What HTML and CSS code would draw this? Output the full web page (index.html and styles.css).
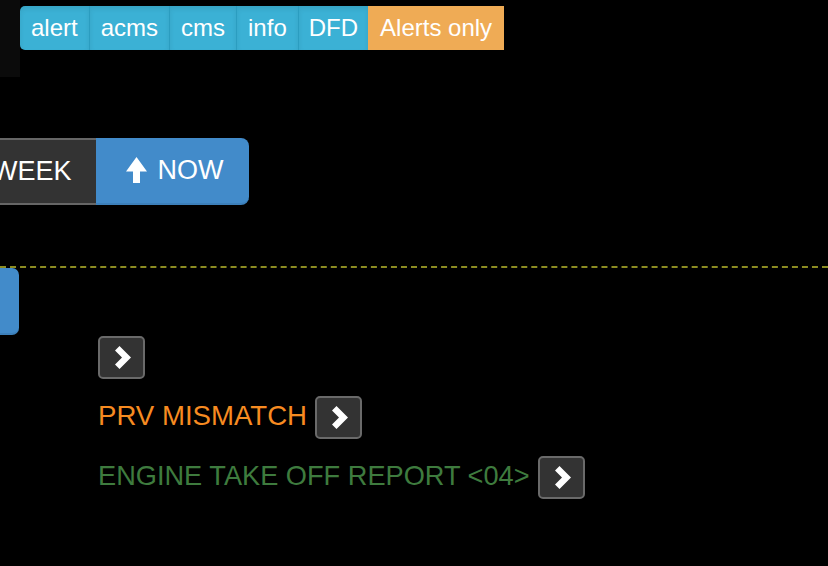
FILE: index.html
```html
<!DOCTYPE html>
<html>
<head>
<meta charset="utf-8">
<link rel="stylesheet" href="styles.css">
</head>
<body>
<div class="top">
  <div class="strip"></div>
  <div class="tabs">
    <span class="tab">alert</span><span class="tab">acms</span><span class="tab">cms</span><span class="tab">info</span><span class="tab narrow">DFD</span><span class="tab warn">Alerts only</span>
  </div>
</div>
<div class="range">
  <span class="rbtn week">WEEK</span>
  <span class="rbtn now"><svg class="up" width="21" height="27" viewBox="0 0 21 27"><polygon points="10.5,0 21,14.5 14,14.5 14,26 7,26 7,14.5 0,14.5" fill="#fff"/></svg>NOW</span>
</div>
<div class="divider"></div>
<div class="stub"></div>
<div class="events">
  <div class="row"><span class="chev"><svg width="16" height="23" viewBox="0 0 16 23"><polygon points="0,4.5 4.5,0 16,11.5 4.5,23 0,18.5 7,11.5" fill="#fff"/></svg></span></div>
  <div class="row"><span class="ev orange">PRV MISMATCH</span><span class="chev"><svg width="16" height="23" viewBox="0 0 16 23"><polygon points="0,4.5 4.5,0 16,11.5 4.5,23 0,18.5 7,11.5" fill="#fff"/></svg></span></div>
  <div class="row"><span class="ev green">ENGINE TAKE OFF REPORT &lt;04&gt;</span><span class="chev"><svg width="16" height="23" viewBox="0 0 16 23"><polygon points="0,4.5 4.5,0 16,11.5 4.5,23 0,18.5 7,11.5" fill="#fff"/></svg></span></div>
</div>
</body>
</html>
```
FILE: styles.css
```css
html, body {
  margin: 0;
  padding: 0;
  background: #000;
  overflow: hidden;
}
body {
  font-family: "Liberation Sans", Arial, Helvetica, sans-serif;
  color: #fff;
  width: 828px;
  height: 566px;
}
.top {
  display: flex;
  align-items: flex-start;
  height: 77px;
}
.strip {
  width: 20px;
  height: 77px;
  background: #0b0b0b;
}
.tabs {
  display: flex;
  margin-top: 6px;
  height: 44px;
}
.tab {
  display: block;
  box-sizing: border-box;
  height: 44px;
  padding: 6px 11px 6px;
  font-size: 24px;
  line-height: 32px;
  background: #3bb1d5;
  border-left: 1px solid #2b9dc0;
  box-shadow: inset 0 3px 5px rgba(0, 0, 0, 0.08);
}
.tab:first-child {
  border-left: none;
  border-radius: 5px 0 0 5px;
}
.tab.narrow {
  padding-left: 10px;
  padding-right: 10px;
}
.tab.warn {
  background: #efab55;
  border-left: none;
  box-shadow: none;
  padding-left: 12px;
  padding-right: 12px;
}
.range {
  display: flex;
  margin-top: 61px;
  margin-left: -33px;
  height: 67px;
}
.rbtn {
  display: flex;
  align-items: center;
  box-sizing: border-box;
  height: 67px;
  font-size: 27px;
}
.week {
  background: #333;
  border-top: 2px solid #666;
  border-bottom: 2px solid #666;
  padding: 0 24px 0 25px;
}
.now {
  background: #428bca;
  border-radius: 0 8px 8px 0;
  border-bottom: 2px solid #3c80bb;
  padding: 0 25px 0 30px;
  width: 153px;
}
.up {
  margin-right: 11px;
  margin-top: -1px;
}
.divider {
  margin-top: 61px;
  border-top: 2px dashed #8c8c22;
}
.stub {
  width: 19px;
  height: 67px;
  background: #428bca;
  border-radius: 0 7px 7px 0;
  border-bottom: 2px solid #3c80bb;
  box-sizing: border-box;
}
.events {
  margin-left: 98px;
  margin-top: 1px;
}
.row {
  display: flex;
  align-items: flex-start;
  height: 60px;
}
.ev {
  font-size: 27.6px;
  line-height: 40px;
  margin-right: 8px;
}
.orange {
  color: #f78b21;
}
.green {
  color: #3e7b3e;
  font-size: 27.2px;
}
.chev {
  display: flex;
  align-items: center;
  justify-content: center;
  box-sizing: border-box;
  width: 47px;
  height: 43px;
  background: #333;
  border: 2px solid #6a6a6a;
  border-radius: 5px;
  padding-left: 3px;
}
```
